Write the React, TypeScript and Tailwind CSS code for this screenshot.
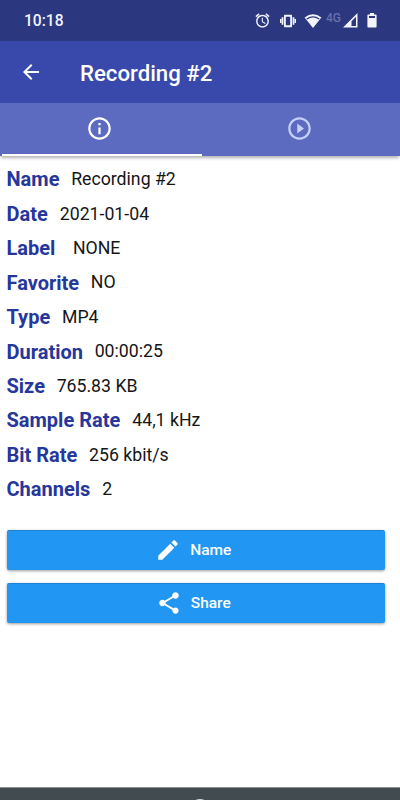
import React from "react";

const rows = [
  { label: "Name", value: "Recording #2", gap: "gap-[11.7px]" },
  { label: "Date", value: "2021-01-04", gap: "gap-[12px]" },
  { label: "Label", value: "NONE", gap: "gap-[17.5px]" },
  { label: "Favorite", value: "NO", gap: "gap-[11.7px]" },
  { label: "Type", value: "MP4", gap: "gap-[11.7px]" },
  { label: "Duration", value: "00:00:25", gap: "gap-[11.7px]" },
  { label: "Size", value: "765.83 KB", gap: "gap-[11.7px]" },
  { label: "Sample Rate", value: "44,1 kHz", gap: "gap-[12px]" },
  { label: "Bit Rate", value: "256 kbit/s", gap: "gap-[11.7px]" },
  { label: "Channels", value: "2", gap: "gap-[12px]" },
];

const icons = {
  back: "M20 11H7.83l5.59-5.59L12 4l-8 8 8 8 1.41-1.41L7.83 13H20v-2z",
  info: "M11 7h2v2h-2zm0 4h2v6h-2zm1-9C6.48 2 2 6.48 2 12s4.48 10 10 10 10-4.48 10-10S17.52 2 12 2zm0 18c-4.41 0-8-3.59-8-8s3.59-8 8-8 8 3.59 8 8-3.59 8-8 8z",
  play: "M10 16.5l6-4.5-6-4.5v9zM12 2C6.48 2 2 6.48 2 12s4.48 10 10 10 10-4.48 10-10S17.52 2 12 2zm0 18c-4.41 0-8-3.59-8-8s3.59-8 8-8 8 3.59 8 8-3.59 8-8 8z",
  edit: "M3 17.25V21h3.75L17.81 9.94l-3.75-3.75L3 17.25zM20.71 7.04c.39-.39.39-1.02 0-1.41l-2.34-2.34c-.39-.39-1.02-.39-1.41 0l-1.83 1.83 3.75 3.75 1.83-1.83z",
  share: "M18 16.08c-.76 0-1.44.3-1.96.77L8.91 12.7c.05-.23.09-.46.09-.7s-.04-.47-.09-.7l7.05-4.11c.54.5 1.25.81 2.04.81 1.66 0 3-1.34 3-3s-1.34-3-3-3-3 1.34-3 3c0 .24.04.47.09.7L8.04 9.81C7.5 9.31 6.79 9 6 9c-1.66 0-3 1.34-3 3s1.34 3 3 3c.79 0 1.5-.31 2.04-.81l7.12 4.16c-.05.21-.08.43-.08.65 0 1.61 1.31 2.92 2.92 2.92s2.92-1.31 2.92-2.92-1.31-2.92-2.92-2.92z",
  alarm: "M22 5.72l-4.6-3.86-1.29 1.53 4.6 3.86L22 5.72zM7.88 3.39L6.6 1.86 2 5.71l1.29 1.53 4.59-3.85zM12.5 8H11v6l4.75 2.85.75-1.23-4-2.37V8zM12 4c-4.97 0-9 4.03-9 9s4.02 9 9 9c4.97 0 9-4.03 9-9s-4.03-9-9-9zm0 16c-3.87 0-7-3.13-7-7s3.13-7 7-7 7 3.13 7 7-3.13 7-7 7z",
};

function Icon({ path, className }: { path: string; className: string }) {
  return (
    <svg viewBox="0 0 24 24" fill="currentColor" className={`block shrink-0 ${className}`}>
      <path d={path} />
    </svg>
  );
}

function StatusBar() {
  return (
    <div className="flex h-[41px] items-center bg-[#2b377f] pl-[24px] pr-[23px] text-[#f2f5ff]">
      <span className="mt-px text-[15.6px] font-medium leading-5">10:18</span>
      <div className="ml-auto flex items-center">
        <Icon path={icons.alarm} className="h-[17px] w-[17px]" />
        <svg viewBox="0 0 16 14" className="ml-[9px] h-[14px] w-4">
          <path fillRule="evenodd" d="M4 1.6q0-.8.8-.8h6.4q.8 0 .8.8v10.8q0 .8-.8.8H4.8q-.8 0-.8-.8zM5.8 2.8v8.4h4.4V2.8z" fill="currentColor" />
          <path d="M1.6 3.2h1.8v7.6H1.6zM12.6 3.2h1.8v7.6h-1.8zM0 5h1.3v4H0zM14.7 5H16v4h-1.3z" fill="currentColor" />
        </svg>
        <svg viewBox="0 0 18 16" className="ml-[8px] h-4 w-[18px]">
          <path d="M.6 4.6Q9-2 17.4 4.6L9 15z" fill="currentColor" />
          <path d="M2.8 6Q9 1.7 15.2 6" fill="none" stroke="#2b377f" strokeWidth="1.4" />
        </svg>
        <span className="ml-[4px] -mt-[5px] w-[15px] text-[12px] font-medium leading-4 text-[#6670aa]">4G</span>
        <svg viewBox="0 0 15 15" className="ml-[2px] h-[15px] w-[15px]">
          <path fillRule="evenodd" d="M0 14.5L14.5 0v14.5zM8.5 8.2v4.8h4.5V3.7z" fill="currentColor" />
        </svg>
        <svg viewBox="0 0 10 15" className="ml-[9px] h-[15px] w-[10px]">
          <path fillRule="evenodd" d="M3 0h4v1.4h1.8q.8 0 .8.8v11.6q0 .8-.8.8H1.2q-.8 0-.8-.8V2.2q0-.8.8-.8H3zM2 3v2h6V3z" fill="currentColor" />
        </svg>
      </div>
    </div>
  );
}

function ActionButton({ icon, label }: { icon: string; label: string }) {
  return (
    <button className="flex h-10 w-[378px] items-center justify-center gap-[9px] rounded-[2px] border-t border-[#2183d1] bg-[#2196f3] pr-[4.5px] text-[15.5px] font-medium text-white shadow-[0_1px_3px_rgba(0,0,0,0.4)]">
      <Icon path={icon} className="h-[26px] w-[26px]" />
      <span>{label}</span>
    </button>
  );
}

export default function App() {
  return (
    <div className="flex h-[800px] w-[400px] flex-col overflow-hidden bg-white font-['Roboto',sans-serif]">
      <StatusBar />
      <header className="flex h-[62px] shrink-0 items-center bg-[#3949ab] pl-[19px] text-white">
        <Icon path={icons.back} className="-mt-[1px] h-6 w-6" />
        <h1 className="ml-[37px] mt-[1px] text-[22.2px] font-medium leading-7">Recording #2</h1>
      </header>
      <nav className="flex h-[53px] shrink-0 bg-[#5c6bc0] pl-[2px] shadow-[0_3px_3px_-1px_rgba(0,0,0,0.3)]">
        <div className="flex w-[200px] flex-col items-center border-b-2 border-white pr-[5px] pt-[12px] text-white">
          <Icon path={icons.info} className="h-[27px] w-[27px]" />
        </div>
        <div className="flex w-[198px] flex-col items-center pr-[3px] pt-[12px] text-[#c6d0fa]">
          <Icon path={icons.play} className="h-[27px] w-[27px]" />
        </div>
      </nav>
      <main className="flex grow flex-col pl-[6.5px]">
        <dl className="mt-[6.2px]">
          {rows.map((row) => (
            <div key={row.label} className={`flex h-[34.45px] items-center whitespace-nowrap ${row.gap}`}>
              <dt className="text-[20px] font-bold text-[#26379c]">{row.label}</dt>
              <dd className="text-[17.7px] text-[#151515]">{row.value}</dd>
            </div>
          ))}
        </dl>
        <div className="mt-[23.3px] flex flex-col gap-[13px]">
          <ActionButton icon={icons.edit} label="Name" />
          <ActionButton icon={icons.share} label="Share" />
        </div>
      </main>
      <footer className="flex h-[13px] shrink-0 justify-center overflow-hidden border-t border-[#8e9496] bg-[#424c50] pt-[11px]">
        <div className="h-5 w-5 shrink-0 rounded-full bg-[#d4d7d8]" />
      </footer>
    </div>
  );
}
